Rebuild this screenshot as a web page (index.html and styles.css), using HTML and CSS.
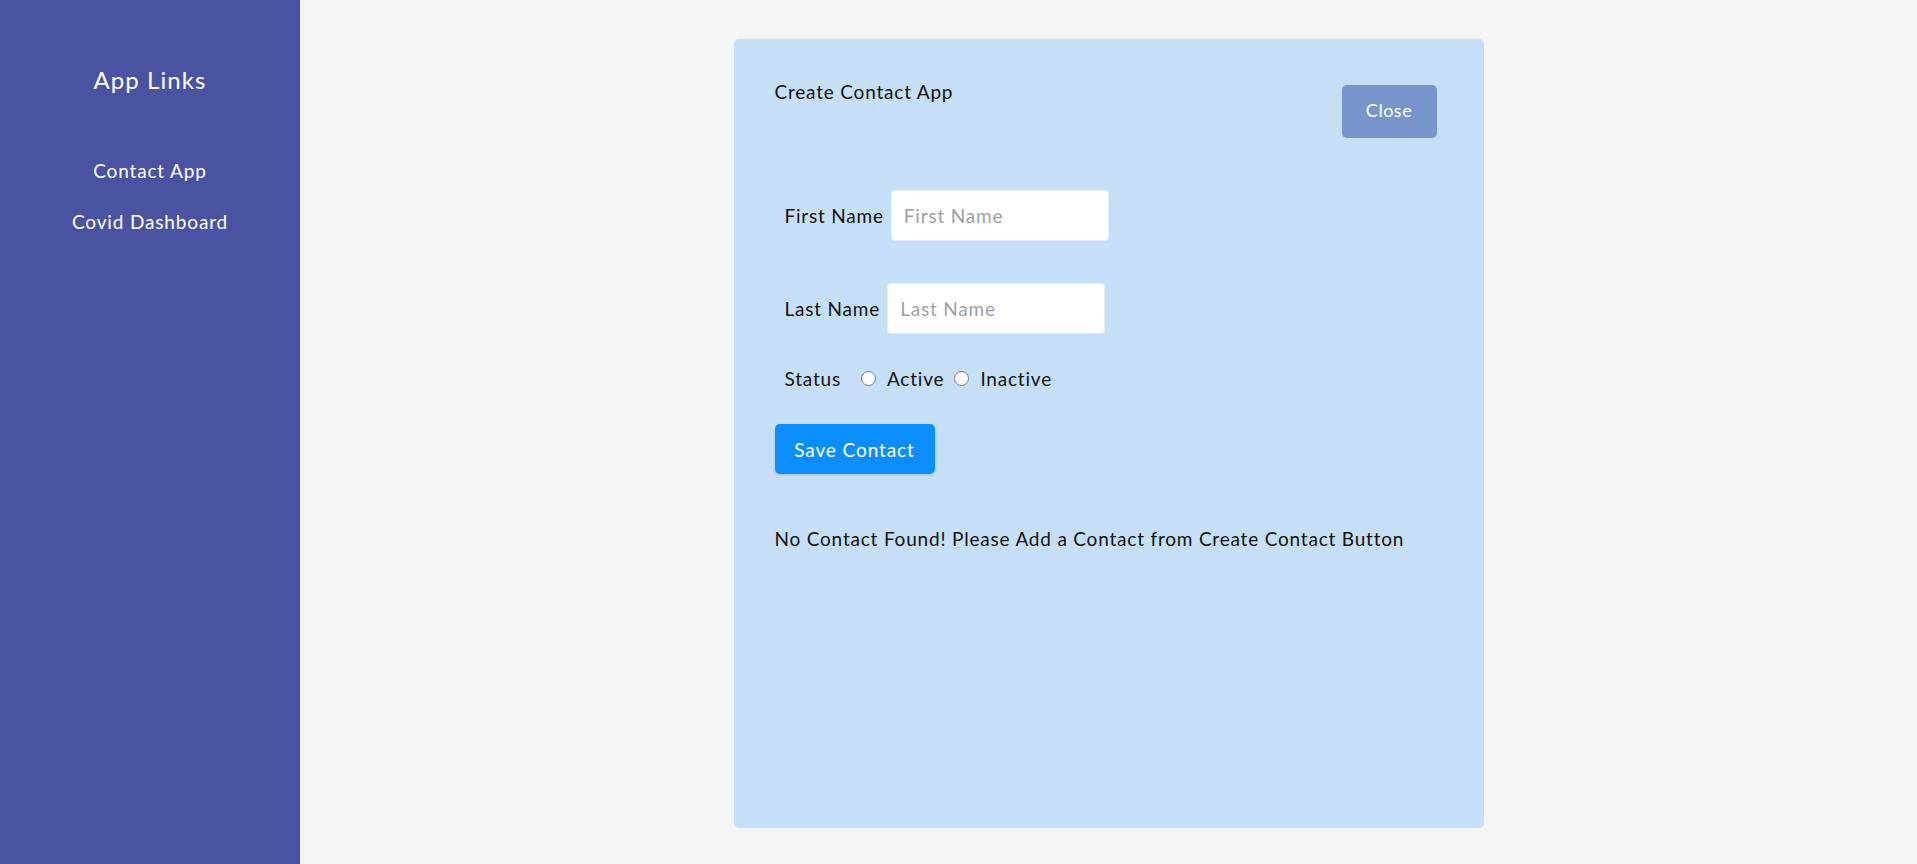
FILE: index.html
```html
<!DOCTYPE html>
<html>
<head>
<meta charset="utf-8">
<link rel="stylesheet" href="styles.css">
</head>
<body>
<div class="layout">
  <aside class="sidebar">
    <h2 class="side-title">App Links</h2>
    <nav class="side-links">
      <a class="side-link">Contact App</a>
      <a class="side-link">Covid Dashboard</a>
    </nav>
  </aside>
  <main class="main">
    <section class="card">
      <div class="card-head">
        <div class="card-title">Create Contact App</div>
        <button class="btn-close">Close</button>
      </div>
      <form class="form">
        <div class="row">
          <label class="label">First Name</label>
          <input class="input" type="text" placeholder="First Name">
        </div>
        <div class="row">
          <label class="label">Last Name</label>
          <input class="input" type="text" placeholder="Last Name">
        </div>
        <div class="row status-row">
          <span class="label status-label">Status</span>
          <input class="radio" type="radio" name="status">
          <span class="radio-text">Active</span>
          <input class="radio" type="radio" name="status">
          <span class="radio-text">Inactive</span>
        </div>
        <button type="button" class="btn-save">Save Contact</button>
      </form>
      <p class="empty">No Contact Found! Please Add a Contact from Create Contact Button</p>
    </section>
  </main>
</div>
</body>
</html>
```
FILE: styles.css
```css
* { box-sizing: border-box; }
html, body { margin: 0; padding: 0; }
body {
  font-family: "Lato", "Liberation Sans", sans-serif;
  background: #f4f4f4;
  color: #111;
}
.layout {
  display: flex;
  height: 864px;
}
.sidebar {
  width: 300px;
  flex: 0 0 300px;
  background: #4953a1;
  color: #fff;
  text-align: center;
  padding-top: 64px;
}
.side-title {
  margin: 0;
  font-weight: 400;
  font-size: 24px;
  line-height: 32px;
  letter-spacing: 1.1px;
}
.side-links {
  display: flex;
  flex-direction: column;
  align-items: center;
  gap: 27px;
  margin-top: 63px;
}
.side-link {
  font-size: 19px;
  line-height: 24px;
  letter-spacing: 0.85px;
  color: #fff;
}
.main {
  flex: 1;
  padding-top: 39px;
}
.card {
  width: 750px;
  height: 789px;
  margin: 0 auto;
  background: #c5dff7;
  border-radius: 5px;
  padding: 46px 47px 0 41px;
  letter-spacing: 0.8px;
}
.card-head {
  display: flex;
  justify-content: space-between;
  align-items: flex-start;
}
.card-title {
  font-size: 19px;
  line-height: 22px;
  margin-top: -4px;
}
.btn-close {
  width: 95px;
  height: 53px;
  border: none;
  border-radius: 5px;
  background: #7895cb;
  color: #fff;
  font-family: inherit;
  font-size: 18px;
  letter-spacing: 0.5px;
  padding: 0 0 4px;
}
.form {
  margin-top: 52px;
}
.row {
  display: flex;
  align-items: center;
  padding-left: 10px;
  margin-bottom: 42px;
}
.label {
  font-size: 19px;
  margin-right: 7px;
}
.input {
  width: 218px;
  height: 51px;
  border: 1px solid #e4ecf4;
  border-radius: 4px;
  background: #fff;
  padding: 0 12px;
  font-family: inherit;
  font-size: 19px;
  letter-spacing: 0.8px;
}
.input::placeholder { color: #9aa0a8; }
.status-row { margin-top: -9px; margin-bottom: 34px; }
.status-label { margin-right: 20px; }
.radio {
  margin: 0 11px 0 0;
  width: 15px;
  height: 15px;
}
.radio-text {
  font-size: 19px;
  margin-right: 10px;
}
.btn-save {
  height: 50px;
  width: 160px;
  border: none;
  border-radius: 5px;
  background: #0b8efc;
  color: #fff;
  font-family: inherit;
  font-size: 19px;
  letter-spacing: 0.9px;
  box-shadow: 0 1px 3px rgba(0,0,0,0.15);
}
.empty {
  margin: 53px 0 0;
  font-size: 19px;
}
```
